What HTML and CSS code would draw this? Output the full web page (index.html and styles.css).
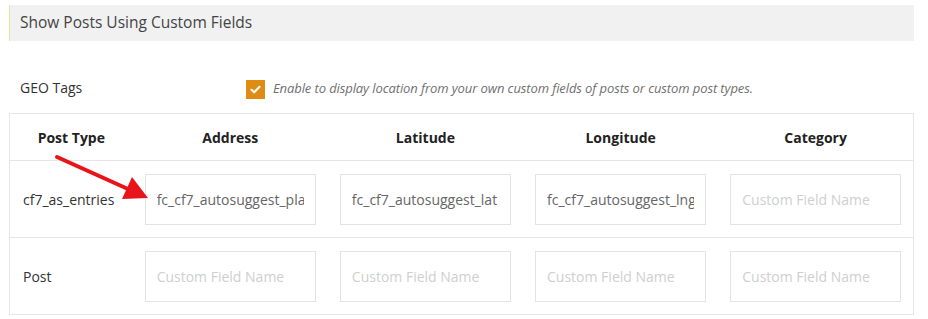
FILE: index.html
```html
<!DOCTYPE html>
<html lang="en">
<head>
<meta charset="utf-8">
<title>Show Posts Using Custom Fields</title>
<link rel="stylesheet" href="styles.css">
</head>
<body>
<div class="page">
  <h2 class="section-title">Show Posts Using Custom Fields</h2>
  <div class="geo-row">
    <div class="geo-label">GEO Tags</div>
    <span class="checkbox" aria-checked="true" role="checkbox">
      <svg width="11" height="9" viewBox="0 0 11 9"><path d="M1.5 4.8 L4.2 7.3 L9.5 1.8" fill="none" stroke="#fff" stroke-width="2.2" stroke-linecap="round" stroke-linejoin="round"/></svg>
    </span>
    <p class="geo-desc">Enable to display location from your own custom fields of posts or custom post types.</p>
  </div>
  <table class="fields">
    <thead>
      <tr>
        <th class="col-type">Post Type</th>
        <th>Address</th>
        <th>Latitude</th>
        <th>Longitude</th>
        <th>Category</th>
      </tr>
    </thead>
    <tbody>
      <tr>
        <td class="type">cf7_as_entries</td>
        <td><input class="field" type="text" value="fc_cf7_autosuggest_place" placeholder="Custom Field Name"></td>
        <td><input class="field" type="text" value="fc_cf7_autosuggest_lat" placeholder="Custom Field Name"></td>
        <td><input class="field" type="text" value="fc_cf7_autosuggest_lng" placeholder="Custom Field Name"></td>
        <td><input class="field" type="text" value="" placeholder="Custom Field Name"></td>
      </tr>
      <tr>
        <td class="type">Post</td>
        <td><input class="field" type="text" value="" placeholder="Custom Field Name"></td>
        <td><input class="field" type="text" value="" placeholder="Custom Field Name"></td>
        <td><input class="field" type="text" value="" placeholder="Custom Field Name"></td>
        <td><input class="field" type="text" value="" placeholder="Custom Field Name"></td>
      </tr>
    </tbody>
  </table>
</div>
<svg class="annotation" width="928" height="319" viewBox="0 0 928 319">
  <line x1="57" y1="157" x2="128" y2="189" stroke="#e8141a" stroke-width="4" stroke-linecap="round"/>
  <polygon points="148,198 122,199 132,177" fill="#e8141a"/>
</svg>
</body>
</html>
```
FILE: styles.css
```css
* { box-sizing: border-box; }

html, body {
  margin: 0;
  padding: 0;
  background: #ffffff;
}

body {
  font-family: "Open Sans", "Noto Sans", "DejaVu Sans", sans-serif;
  color: #333;
  position: relative;
  width: 928px;
  height: 319px;
  overflow: hidden;
}

.page {
  padding: 5px 14px 0 9px;
}

.section-title {
  margin: 0;
  height: 36px;
  line-height: 35px;
  background: #f1f1f1;
  border-left: 1px solid #efe3a0;
  padding-left: 10px;
  font-size: 15.5px;
  font-weight: 400;
  color: #444;
}

.geo-row {
  display: flex;
  align-items: center;
  height: 72px;
  padding-left: 11px;
  padding-top: 25px;
}

.geo-label {
  width: 226px;
  font-size: 14px;
  color: #333;
  margin-top: -5px;
}

.checkbox {
  width: 19px;
  height: 19px;
  background: #df8c14;
  display: flex;
  align-items: center;
  justify-content: center;
  flex: none;
}

.geo-desc {
  margin: 0 0 0 8px;
  font-size: 13px;
  font-style: italic;
  color: #707070;
  letter-spacing: -0.1px;
  margin-top: -3px;
}

.fields {
  width: 905px;
  border-collapse: collapse;
  border: 1px solid #e6e6e6;
  table-layout: fixed;
}

.fields th {
  height: 47px;
  font-size: 14px;
  font-weight: 700;
  color: #222;
  text-align: center;
  padding: 0;
  width: 195px;
  border-bottom: 1px solid #e6e6e6;
}

.fields th.col-type {
  width: 123px;
}

.fields td {
  height: 77px;
  padding: 0 12px;
  border-bottom: 1px solid #e6e6e6;
  vertical-align: middle;
}

.fields td.type {
  padding-left: 13px;
  font-size: 14px;
  color: #333;
}

.field {
  display: block;
  width: 171px;
  height: 51px;
  border: 1px solid #e3e3e3;
  padding: 0 11px;
  font-family: "Open Sans", "Noto Sans", sans-serif;
  font-size: 14px;
  color: #666;
  background: #fff;
  outline: none;
}

.field::placeholder {
  color: #cfcfcf;
}

.annotation {
  position: absolute;
  left: 0;
  top: 0;
  pointer-events: none;
}
```
